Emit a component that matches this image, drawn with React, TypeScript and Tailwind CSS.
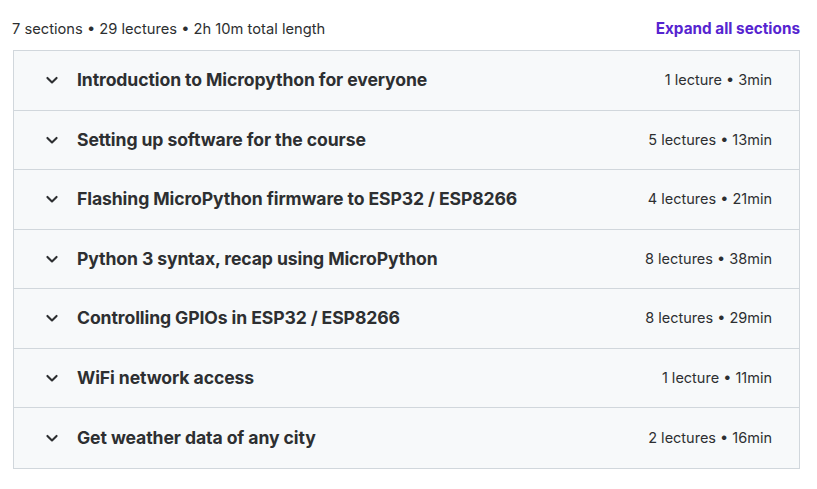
import React from 'react';

interface Section {
  title: string;
  meta: string;
}

const sections: Section[] = [
  { title: 'Introduction to Micropython for everyone', meta: '1 lecture • 3min' },
  { title: 'Setting up software for the course', meta: '5 lectures • 13min' },
  { title: 'Flashing MicroPython firmware to ESP32 / ESP8266', meta: '4 lectures • 21min' },
  { title: 'Python 3 syntax, recap using MicroPython', meta: '8 lectures • 38min' },
  { title: 'Controlling GPIOs in ESP32 / ESP8266', meta: '8 lectures • 29min' },
  { title: 'WiFi network access', meta: '1 lecture • 11min' },
  { title: 'Get weather data of any city', meta: '2 lectures • 16min' },
];

const Chevron = () => (
  <svg width="20" height="20" viewBox="0 0 24 24" fill="none" className="shrink-0">
    <path d="M6.5 9.5l5.5 5.5 5.5-5.5" stroke="#2d2f31" strokeWidth="2.5" strokeLinecap="round" strokeLinejoin="round" />
  </svg>
);

const App: React.FC = () => {
  return (
    <div className="min-h-screen bg-white font-['Inter',sans-serif] text-[#2d2f31]">
      <div className="pt-[18px] pl-[12px] pr-[17px]">
        {/* Curriculum summary */}
        <div className="flex items-center justify-between leading-[22px]">
          <span className="text-[14.7px] text-[#2d2f31]">7 sections • 29 lectures • 2h 10m total length</span>
          <button className="text-[15.3px] font-bold text-[#5624d0]">Expand all sections</button>
        </div>

        {/* Section list */}
        <div className="mt-[10px] ml-[1px] border border-[#d1d7dc] bg-[#f7f9fa]">
          {sections.map((s, i) => (
            <div
              key={s.title}
              className={`flex h-[59.5px] items-center justify-between pl-[28px] pr-[27px] ${
                i < sections.length - 1 ? 'border-b border-[#d1d7dc]' : ''
              }`}
            >
              <div className="flex items-center gap-[15px]">
                <Chevron />
                <span className="text-[17.6px] font-bold tracking-[-0.1px]">{s.title}</span>
              </div>
              <span className="text-[14.5px]">{s.meta}</span>
            </div>
          ))}
        </div>
      </div>
    </div>
  );
};

export default App;
